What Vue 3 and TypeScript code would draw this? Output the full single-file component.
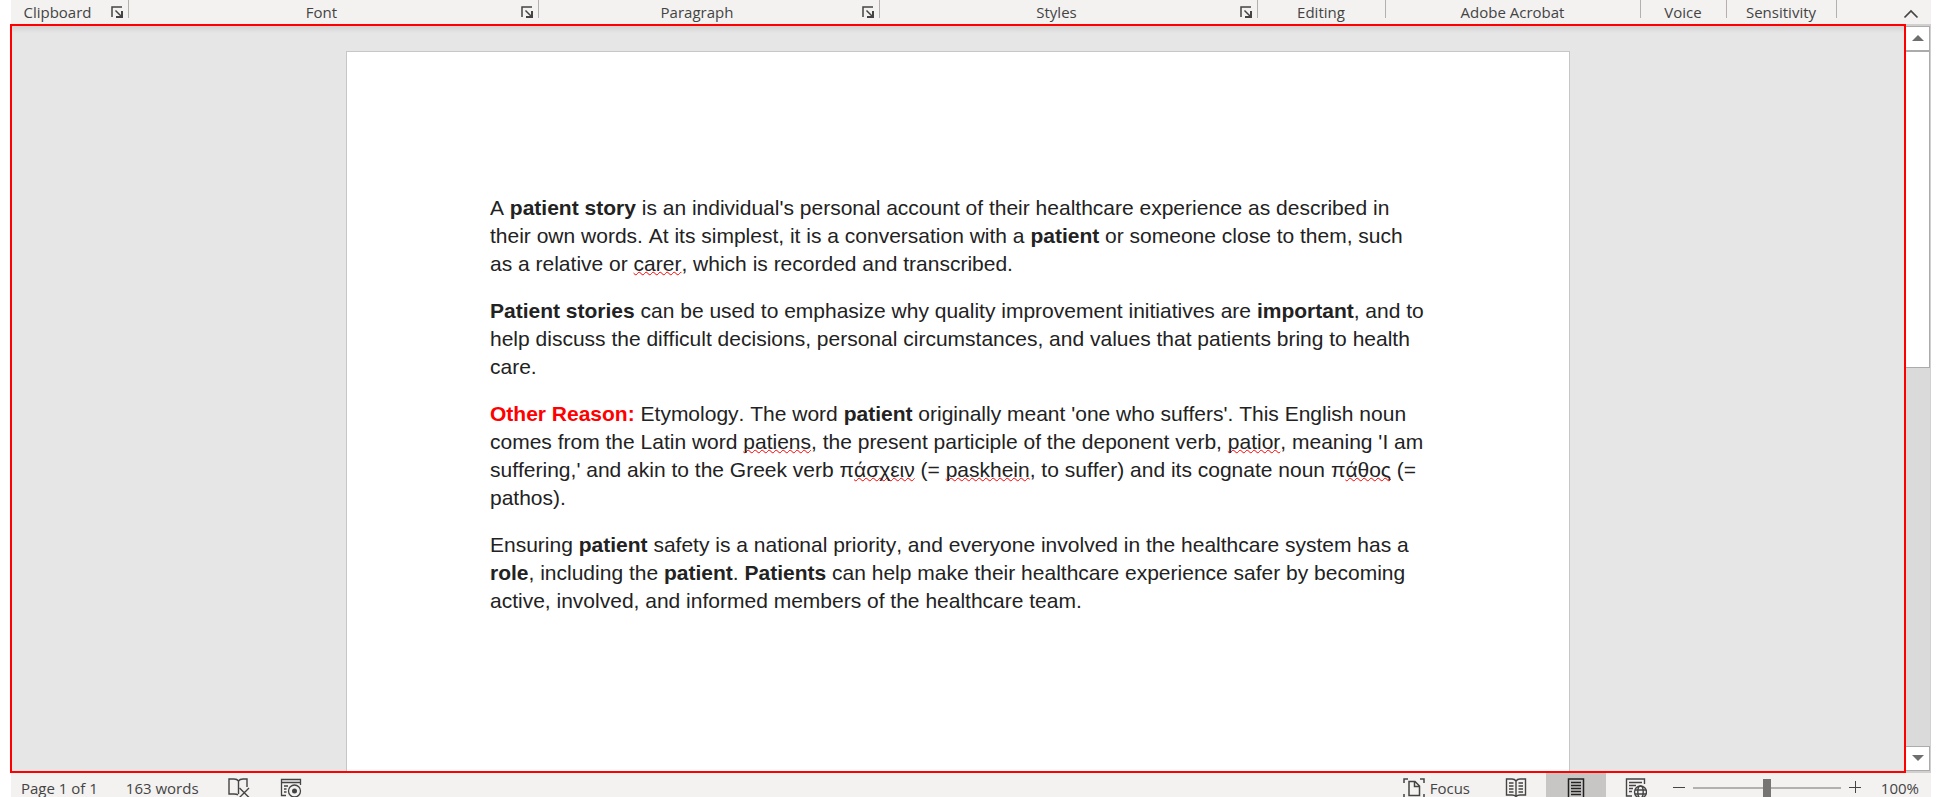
<script setup lang="ts">
import { ref } from 'vue'

interface RibbonGroup {
  name: string
  launcher: boolean
}

const groups: RibbonGroup[] = [
  { name: 'Clipboard', launcher: true },
  { name: 'Font', launcher: true },
  { name: 'Paragraph', launcher: true },
  { name: 'Styles', launcher: true },
  { name: 'Editing', launcher: false },
  { name: 'Adobe Acrobat', launcher: false },
  { name: 'Voice', launcher: false },
  { name: 'Sensitivity', launcher: false },
]

const zoom = ref(100)
</script>

<template>
  <div class="app">
    <header class="ribbon">
      <div v-for="group in groups" :key="group.name" class="group">
        <span class="group-name">{{ group.name }}</span>
        <button v-if="group.launcher" class="launcher" type="button" :aria-label="group.name + ' settings'">
          <svg width="12" height="12" viewBox="0 0 12 12" fill="none" stroke="#444">
            <path d="M1 11V1H11" stroke-width="1.5" />
            <path d="M4.5 4.5L10 10" stroke-width="1.5" />
            <path d="M11 5V11H5" stroke-width="2" />
          </svg>
        </button>
      </div>
      <button class="collapse" type="button" aria-label="Collapse the ribbon">
        <svg width="16" height="10" viewBox="0 0 16 10" fill="none" stroke="#444" stroke-width="1.7">
          <path d="M1.5 8.5L8 2L14.5 8.5" />
        </svg>
      </button>
    </header>

    <div class="body">
      <main class="workspace">
        <article class="page">
          <p>
            A <b>patient story</b> is an individual's personal account of their healthcare experience as described in
            their own words. At its simplest, it is a conversation with a <b>patient</b> or someone close to them, such
            as a relative or <span class="typo">carer</span>, which is recorded and transcribed.
          </p>
          <p>
            <b>Patient stories</b> can be used to emphasize why quality improvement initiatives are <b>important</b>, and to
            help discuss the difficult decisions, personal circumstances, and values that patients bring to health care.
          </p>
          <p>
            <b class="heading">Other Reason:</b> Etymology. The word <b>patient</b> originally meant 'one who suffers'. This
            English noun comes from the Latin word <span class="typo">patiens</span>, the present participle of the deponent
            verb, <span class="typo">patior</span>, meaning 'I am suffering,' and akin to the Greek verb
            π<span class="typo">άσχειν</span> (= <span class="typo">paskhein</span>, to suffer) and its cognate noun
            π<span class="typo">άθος</span> (= pathos).
          </p>
          <p>
            Ensuring <b>patient</b> safety is a national priority, and everyone involved in the healthcare system has a
            <b>role</b>, including the <b>patient</b>. <b>Patients</b> can help make their healthcare experience safer by
            becoming active, involved, and informed members of the healthcare team.
          </p>
        </article>
      </main>
      <div class="scrollbar">
        <button class="arrow" type="button" aria-label="Scroll up">
          <svg width="12" height="6" viewBox="0 0 12 6" fill="#6e6e6e"><path d="M0 6L6 0L12 6Z" /></svg>
        </button>
        <div class="track"><div class="thumb"></div></div>
        <button class="arrow" type="button" aria-label="Scroll down">
          <svg width="12" height="6" viewBox="0 0 12 6" fill="#6e6e6e"><path d="M0 0L6 6L12 0Z" /></svg>
        </button>
      </div>
    </div>

    <footer class="status">
      <div class="info">
        <button type="button">Page 1 of 1</button>
        <button type="button">163 words</button>
        <button class="tool" type="button" aria-label="Proofing errors">
          <svg width="22" height="22" viewBox="0 0 22 22" fill="none" stroke="#444" stroke-width="1.4">
            <path d="M10 18C9 17 8 17 6 17H1V2H6C8 2 9.500 2.500 10.500 4C11.500 2.500 13 2 15 2H19V10M10.500 4V17" />
            <path d="M11.500 11L21 20.500M21 11L11.500 20.500" />
          </svg>
        </button>
        <button class="tool" type="button" aria-label="Record macro">
          <svg width="22" height="22" viewBox="0 0 22 22" fill="none" stroke="#444" stroke-width="1.3">
            <path d="M6 18.500H1.500V2.500H20.500V8M1.500 5.500H20.500" />
            <path d="M4 9H8M4 12H6.500M4 15H6.500" />
            <circle cx="14.500" cy="14" r="6" />
            <circle cx="14.500" cy="14" r="2.500" fill="#444" stroke="none" />
          </svg>
        </button>
      </div>
      <div class="views">
        <button class="focus" type="button">
          <svg width="22" height="22" viewBox="0 0 22 22" fill="none" stroke="#444" stroke-width="1.5">
            <path d="M1 6V2H5M17 2H21V6M1 17V21H5M21 17V21H17" />
            <path d="M6 4.500H12L16.500 9V18.500H6ZM11.500 4.500V9.500H16.500" />
          </svg>
          <span>Focus</span>
        </button>
        <button class="view" type="button" aria-label="Read mode">
          <svg width="22" height="22" viewBox="0 0 22 22" fill="none" stroke="#444" stroke-width="1.4">
            <path d="M11 4C10 2.500 8.500 2 7 2H1.500V18H7C9 18 10 18.500 11 19.500C12 18.500 13 18 15 18H20.500V2H15C13.500 2 12 2.500 11 4ZM11 4V19" />
            <path d="M4 6H8.500M4 9H8.500M4 12H8.500M4 15H8.500M13.500 6H18M13.500 9H18M13.500 12H18M13.500 15H18" />
          </svg>
        </button>
        <button class="view active" type="button" aria-label="Print layout">
          <svg width="18" height="22" viewBox="0 0 18 22" fill="none" stroke="#222" stroke-width="1.5">
            <path d="M1.500 2H16.500V21H1.500Z" />
            <path d="M4 5.500H14M4 8.500H14M4 11.500H14M4 14.500H14M4 17.500H14" />
          </svg>
        </button>
        <button class="view" type="button" aria-label="Web layout">
          <svg width="22" height="22" viewBox="0 0 22 22" fill="none" stroke="#444" stroke-width="1.4">
            <path d="M7 19H1.500V2H19.500V7M4 5.500H17M4 8.500H11M4 11.500H8M4 14.500H7" />
            <circle cx="15.500" cy="15" r="6" />
            <ellipse cx="15.500" cy="15" rx="2.700" ry="6" />
            <path d="M10 13H21M10 17H21" />
          </svg>
        </button>
        <button class="step" type="button" aria-label="Zoom out">
          <svg width="12" height="12" viewBox="0 0 12 12" stroke="#444"><path d="M0 6.500H12" /></svg>
        </button>
        <input v-model.number="zoom" class="slider" type="range" min="10" max="190" aria-label="Zoom" />
        <button class="step" type="button" aria-label="Zoom in">
          <svg width="12" height="12" viewBox="0 0 12 12" stroke="#444"><path d="M0 6.500H12M6.500 0V12" /></svg>
        </button>
        <button class="percent" type="button">{{ zoom }}%</button>
      </div>
    </footer>
  </div>
</template>

<style>
body {
  margin: 0;
  background: #fff;
}
</style>

<style scoped>
.app {
  display: flex;
  flex-direction: column;
  box-sizing: border-box;
  height: 100vh;
  padding: 0 11px 0 10px;
  overflow: hidden;
  color: #444;
  font-family: 'Open Sans', 'Noto Sans', sans-serif;
  font-size: 15px;
}

button {
  display: flex;
  align-items: center;
  justify-content: center;
  margin: 0;
  padding: 0;
  border: 0;
  background: none;
  color: inherit;
  font: inherit;
  white-space: nowrap;
}

svg {
  display: block;
  flex: none;
}

.ribbon {
  display: grid;
  flex: none;
  grid-template-columns: 118fr 410fr 341fr 378fr 128fr 255fr 86fr 110fr 94fr;
  height: 24px;
  margin-left: 1px;
  background: #f3f2f1;
}

.group {
  display: flex;
  align-items: center;
  height: 18px;
  border-right: 1px solid #b3b0ad;
}

.group-name {
  flex: 1;
  height: 18px;
  padding-right: 1px;
  line-height: 24px;
  text-align: center;
  white-space: nowrap;
}

.launcher {
  align-self: flex-end;
  width: 12px;
  height: 12px;
  margin: 0 5px 0 6px;
}

.collapse {
  justify-self: end;
  width: 16px;
  height: 24px;
  margin-right: 12px;
  padding-top: 4px;
}

.body {
  display: flex;
  flex: 1;
  min-height: 0;
}

.workspace {
  flex: 1;
  min-width: 0;
  box-sizing: border-box;
  padding-top: 25px;
  overflow: hidden;
  border: 2px solid #f00;
  background: linear-gradient(#d2d2d2, #e6e6e6 7px);
}

.page {
  box-sizing: border-box;
  width: 1224px;
  max-width: 100%;
  min-height: 1584px;
  margin: 0 auto;
  padding: 142px 140px 142px 143px;
  border: 1px solid #c6c6c6;
  background: #fff;
  color: #222;
  font-family: 'Liberation Sans', Arial, sans-serif;
  font-size: 21px;
  font-kerning: none;
  line-height: 28px;
}

.page p {
  margin: 0 0 19px;
}

.heading {
  color: #f00;
}

.typo {
  text-decoration: underline wavy #f00 1px;
  text-decoration-skip-ink: none;
  text-underline-offset: 0;
}

.scrollbar {
  display: flex;
  flex-direction: column;
  flex: none;
  box-sizing: border-box;
  width: 25px;
  padding: 2px 1px 2px 0;
  background: #d2d0ce;
}

.arrow {
  box-sizing: border-box;
  flex: none;
  height: 25px;
  padding-bottom: 1px;
  border: 1px solid #ababab;
  border-left: 0;
  background: #fff;
}

.track {
  flex: 1;
  background: #dadada;
}

.thumb {
  box-sizing: border-box;
  height: 45.6%;
  border: 1px solid #ababab;
  border-left: 0;
  background: #fff;
}

.status {
  display: flex;
  flex: none;
  align-items: flex-start;
  justify-content: space-between;
  height: 24px;
  margin-left: 1px;
  overflow: hidden;
  background: #f3f2f1;
}

.info,
.views {
  display: flex;
  align-items: center;
  height: 30px;
}

.info {
  gap: 28px;
  padding-left: 10px;
}

.tool {
  padding: 0 1px;
}

.views {
  padding-right: 12px;
}

.focus {
  gap: 5px;
  margin-right: 16px;
}

.view {
  width: 60px;
  height: 30px;
}

.active {
  background: #c8c6c4;
}

.step {
  width: 12px;
  height: 30px;
  padding-bottom: 2px;
}

.view + .step {
  margin-left: 7px;
}

.slider {
  width: 148px;
  height: 18px;
  margin: 0 8px;
  appearance: none;
  background: linear-gradient(#b3b0ad, #b3b0ad) 0 8px / 100% 2px no-repeat;
}

.slider::-webkit-slider-thumb {
  width: 8px;
  height: 18px;
  appearance: none;
  background: #777573;
}

.percent {
  justify-content: flex-end;
  width: 58px;
}
</style>
